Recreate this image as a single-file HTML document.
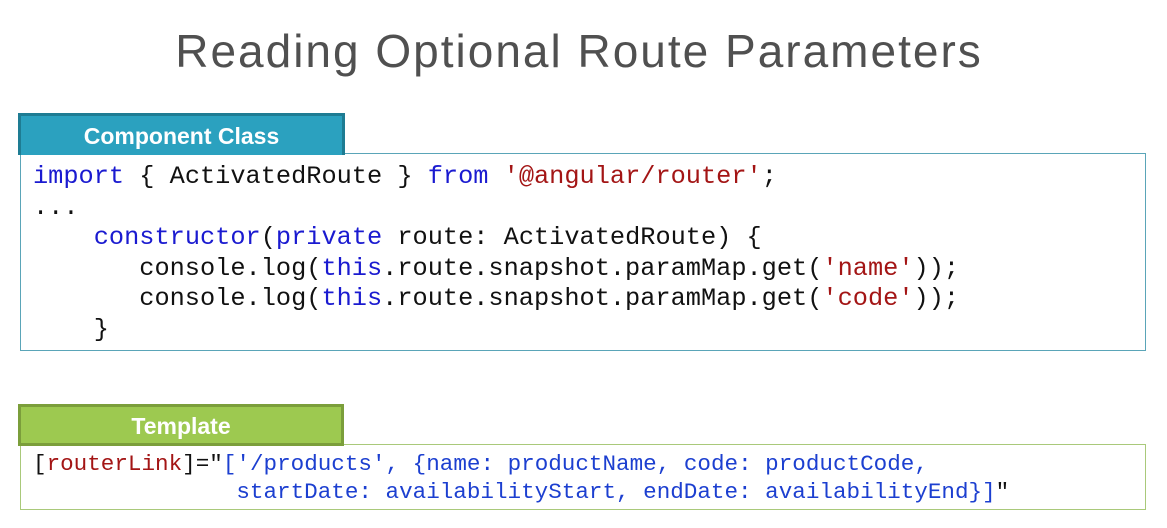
<!DOCTYPE html>
<html><head><style>
body{margin:0;width:1167px;height:528px;background:#fff;position:relative;overflow:hidden;font-family:"Liberation Sans",sans-serif}
.title{position:absolute;left:0;width:1158px;top:24px;text-align:center;font-size:46px;color:#505050;letter-spacing:2px}
.tab{position:absolute;color:#fff;font-weight:bold;font-size:23px;text-align:center;box-sizing:border-box}
.t1{left:18px;top:113px;width:327px;height:42px;background:#2ba1bf;border:3px solid #1e7c93;border-bottom:none;line-height:40px}
.t2{left:18px;top:404px;width:326px;height:42px;background:#9dc950;border:3px solid #7b9e3b;line-height:38px}
.box{position:absolute;box-sizing:border-box;background:#fff}
.b1{left:20px;top:153px;width:1126px;height:198px;border:1px solid #5aa5b8}
.b2{left:20px;top:444px;width:1126px;height:66px;border:1px solid #a9c97a}
pre{margin:0;position:absolute;font-family:"Liberation Mono",monospace;color:#111}
.c1{left:33px;top:162px;font-size:25.3px;line-height:30.6px}
.c2{left:33px;top:450px;font-size:22.6px;line-height:28px}
.k{color:#1a1ad0}.s{color:#a31515}.r{color:#a31515}.b{color:#1c3fd0}
</style></head><body>
<div class="title">Reading Optional Route Parameters</div>
<div class="box b1"></div>
<div class="tab t1">Component Class</div>
<pre class="c1"><span class="k">import</span> { ActivatedRoute } <span class="k">from</span> <span class="s">'@angular/router'</span>;
...
    <span class="k">constructor</span>(<span class="k">private</span> route: ActivatedRoute) {
       console.log(<span class="k">this</span>.route.snapshot.paramMap.get(<span class="s">'name'</span>));
       console.log(<span class="k">this</span>.route.snapshot.paramMap.get(<span class="s">'code'</span>));
    }</pre>
<div class="box b2"></div>
<div class="tab t2">Template</div>
<pre class="c2">[<span class="r">routerLink</span>]="<span class="b">['/products', {name: productName, code: productCode,</span>
<span class="b">               startDate: availabilityStart, endDate: availabilityEnd}]</span>"</pre>
</body></html>
